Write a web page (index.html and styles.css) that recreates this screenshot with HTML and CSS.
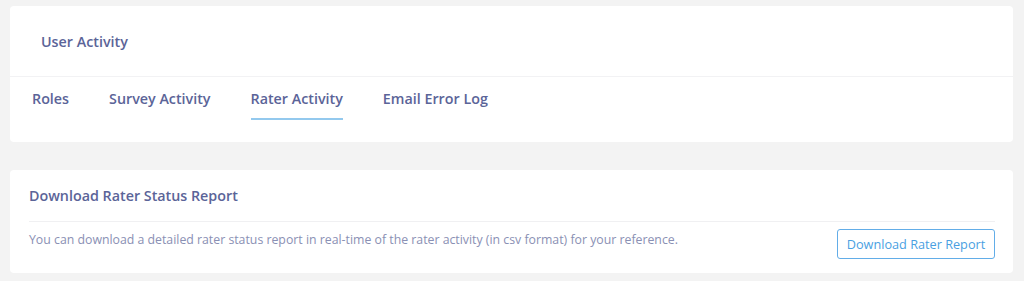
FILE: index.html
```html
<!DOCTYPE html>
<html lang="en">
<head>
    <meta charset="UTF-8">
    <meta name="viewport" content="width=device-width, initial-scale=1.0">
    <title>User Activity</title>
    <link rel="stylesheet" href="styles.css">
</head>
<body>
    <!-- Header card with tabs -->
    <div class="card">
        <div class="card-head">User Activity</div>
        <div class="tabs">
            <div class="tab">Roles</div>
            <div class="tab">Survey Activity</div>
            <div class="tab active">Rater Activity</div>
            <div class="tab">Email Error Log</div>
        </div>
    </div>

    <!-- Report card -->
    <div class="card report">
        <div class="report-title">Download Rater Status Report</div>
        <div class="report-row">
            <p class="report-text">You can download a detailed rater status report in real-time of the rater activity (in csv format) for your reference.</p>
            <button class="btn-outline">Download Rater Report</button>
        </div>
    </div>
</body>
</html>
```

FILE: styles.css
```css
body {
    margin: 0;
    padding: 6px 11px 0 10px;
    background-color: #f3f3f3;
    font-family: "Open Sans", Arial, sans-serif;
    color: #5b6498;
}
.card {
    background-color: #fff;
    border-radius: 4px;
}
.card-head {
    height: 70px;
    display: flex;
    align-items: center;
    padding-left: 31px;
    font-size: 14.3px;
    font-weight: 600;
    border-bottom: 1px solid #f2f2f4;
}
.tabs {
    display: flex;
    gap: 40px;
    padding: 0 22px 22px;
}
.tab {
    font-size: 14.3px;
    font-weight: 600;
    padding-top: 12px;
    height: 29px;
    border-bottom: 2px solid transparent;
}
.tab.active {
    border-bottom-color: #93c9ee;
}
.report {
    margin-top: 28px;
    padding: 0 18px 0 19px;
}
.report-title {
    height: 51px;
    display: flex;
    align-items: center;
    font-size: 14.3px;
    font-weight: 600;
    border-bottom: 1px solid #f0f0f2;
}
.report-row {
    display: flex;
    justify-content: space-between;
    align-items: flex-start;
    height: 51px;
}
.report-text {
    margin: 9px 0 0;
    font-size: 12.3px;
    color: #8a90b4;
}
.btn-outline {
    margin-top: 7px;
    width: 158px;
    height: 30px;
    background: #fff;
    border: 1px solid #62ade8;
    border-radius: 3px;
    color: #4a9fe2;
    font-family: "Open Sans", Arial, sans-serif;
    font-size: 12.7px;
    cursor: pointer;
}
```
